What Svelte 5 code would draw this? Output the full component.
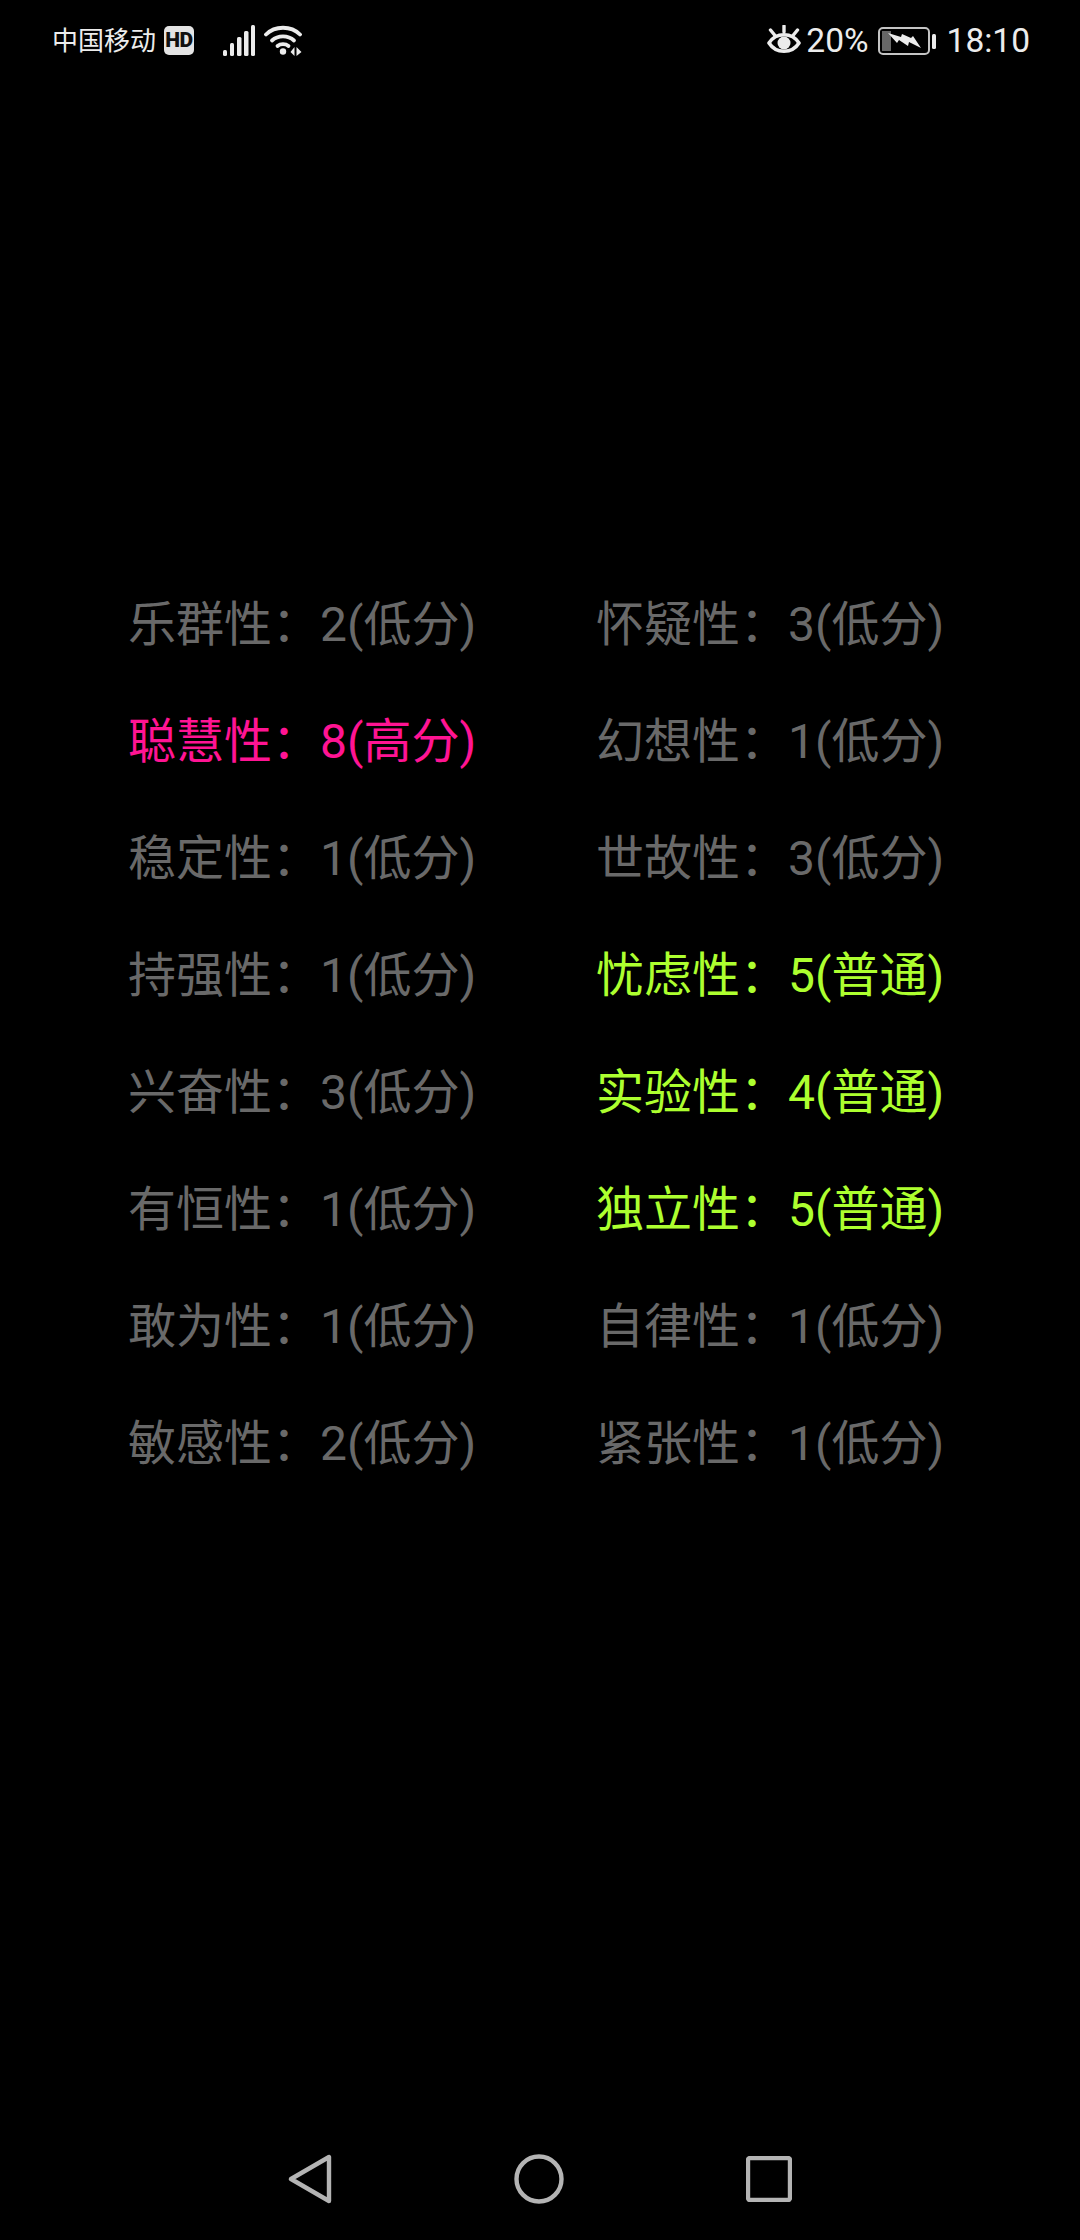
<script>
  const traits = [
    ['乐群性', 2, 'low'], ['怀疑性', 3, 'low'],
    ['聪慧性', 8, 'high'], ['幻想性', 1, 'low'],
    ['稳定性', 1, 'low'], ['世故性', 3, 'low'],
    ['持强性', 1, 'low'], ['忧虑性', 5, 'mid'],
    ['兴奋性', 3, 'low'], ['实验性', 4, 'mid'],
    ['有恒性', 1, 'low'], ['独立性', 5, 'mid'],
    ['敢为性', 1, 'low'], ['自律性', 1, 'low'],
    ['敏感性', 2, 'low'], ['紧张性', 1, 'low']
  ];
  const labels = { low: '低分', mid: '普通', high: '高分' };
</script>

<div class="screen">
  <header class="status">
    <div class="left">
      <span class="carrier">中国移动</span>
      <span class="hd">HD</span>
      <svg class="signal" width="34" height="31" viewBox="0 0 34 31" fill="#ececec">
        <rect x="1" y="25" width="4" height="6" rx="1.5" />
        <rect x="8" y="18" width="4" height="13" rx="1.5" />
        <rect x="15" y="12" width="4.5" height="19" rx="1.5" />
        <rect x="22" y="6" width="4.5" height="25" rx="1.5" />
        <rect x="29" y="0" width="4" height="31" rx="1.5" />
      </svg>
      <svg class="wifi" width="38" height="31" viewBox="0 0 38 31">
        <g fill="none" stroke="#ececec" stroke-width="3.8" stroke-linecap="round">
          <path d="M2 9.5 C11 0.5 27 0.5 36 9.5" />
          <path d="M8 15.5 C14 10 24 10 30 15.5" />
          <path d="M13.5 21 C16.5 18.5 21.5 18.5 24.5 21" />
        </g>
        <circle cx="19" cy="26.5" r="3.2" fill="#ececec" />
        <path d="M26.5 27 L30.5 22 V31 Z M32.5 22 L37.5 27 L32.5 31 Z" fill="#ececec" />
      </svg>
    </div>
    <div class="right">
      <svg class="eye" width="34" height="29" viewBox="0 0 34 29">
        <path d="M2 18 C9 7 25 7 32 18 C25 29 9 29 2 18 Z" fill="none" stroke="#ececec" stroke-width="3.6" stroke-linejoin="round" />
        <circle cx="17" cy="18" r="6.5" fill="#ececec" />
        <path d="M17 1 V7 M3.5 5 L8 10.5 M30.5 5 L26 10.5" stroke="#ececec" stroke-width="3.4" stroke-linecap="round" />
      </svg>
      <span class="pct">20%</span>
      <svg class="battery" width="59" height="28" viewBox="0 0 59 28">
        <rect x="1" y="1" width="50" height="26" rx="4" fill="none" stroke="#c4c4c4" stroke-width="2" />
        <rect x="4" y="4" width="9" height="20" fill="#666" />
        <path d="M10 6 L23 10 L24 7 L33 11 L35 9 L43 21 L31 15 L30 19 L21 13 L19 16 Z" fill="#ececec" />
        <rect x="54" y="7" width="4" height="15" rx="1.5" fill="#ececec" />
      </svg>
      <span class="time">18:10</span>
    </div>
  </header>

  <main class="traits">
    {#each traits as [name, score, level]}
      <div class="trait {level}">{name}：{score}({labels[level]})</div>
    {/each}
  </main>

  <nav class="navbar">
    <svg width="44" height="50" viewBox="0 0 44 50">
      <path d="M41 3 V47 L3 25 Z" fill="none" stroke="#b4b4b4" stroke-width="4.4" stroke-linejoin="round" />
    </svg>
    <svg width="50" height="50" viewBox="0 0 50 50">
      <circle cx="25" cy="25" r="22.5" fill="none" stroke="#b4b4b4" stroke-width="4.4" />
    </svg>
    <svg width="46" height="46" viewBox="0 0 46 46">
      <rect x="2" y="2" width="42" height="42" rx="2" fill="none" stroke="#b4b4b4" stroke-width="4.4" />
    </svg>
  </nav>
</div>

<style>
  :global(body) {
    margin: 0;
    background: #000;
  }

  .screen {
    width: 1080px;
    height: 2240px;
    display: flex;
    flex-direction: column;
    background: #000;
    font-family: Roboto, "Noto Sans CJK SC", sans-serif;
  }

  /* Status bar */
  .status {
    height: 81px;
    display: flex;
    justify-content: space-between;
    align-items: center;
    padding: 0 50px 0 52px;
    color: #ececec;
  }
  .left, .right {
    display: flex;
    align-items: center;
  }
  .carrier {
    font-size: 26px;
    font-family: "Noto Sans CJK SC", sans-serif;
    line-height: 30px;
    margin-bottom: 3px;
  }
  .hd {
    width: 30px;
    height: 29px;
    margin-left: 8px;
    border-radius: 5px;
    background: #e4e4e4;
    color: #111;
    font-size: 21px;
    font-weight: 900;
    line-height: 29px;
    text-align: center;
    letter-spacing: -0.5px;
  }
  .signal { margin-left: 28px; }
  .wifi { margin-left: 8px; }
  .eye { margin-top: -3px; }
  .pct, .time {
    font-size: 33.5px;
    line-height: 40px;
  }
  .pct { margin-left: 5px; }
  .battery { margin-left: 9px; }
  .time { margin-left: 10px; }

  /* Trait table */
  .traits {
    display: grid;
    grid-template-columns: 468px 1fr;
    grid-auto-rows: 117px;
    margin-top: 485px;
    padding-left: 128px;
  }
  .trait {
    font-size: 48px;
    line-height: 117px;
    white-space: nowrap;
    color: #696969;
  }
  .trait.high { color: #ff1493; }
  .trait.mid { color: #adff2f; }

  /* Navigation bar */
  .navbar {
    margin-top: auto;
    margin-bottom: 36px;
    height: 50px;
    display: flex;
    align-items: center;
    padding-left: 288px;
    gap: 182px;
  }
</style>
